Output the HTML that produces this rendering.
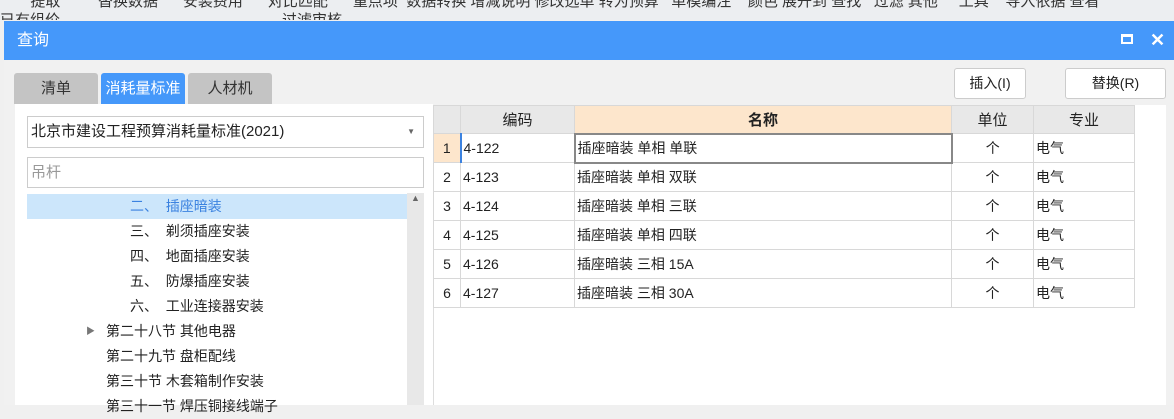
<!DOCTYPE html>
<html><head><meta charset="utf-8"><style>
*{margin:0;padding:0;box-sizing:border-box}
body{width:1174px;height:405px;overflow:hidden;background:#f0f0f0;font-family:"Liberation Sans","Noto Sans CJK SC",sans-serif;font-size:14px;color:#222;position:relative}
.abs{position:absolute}
.menu{left:0;top:0;width:1174px;height:20px;background:#eceef1;overflow:hidden}
.menu div{position:absolute;white-space:nowrap;font-size:15px;color:#333}
.title{left:4px;top:21px;width:1170px;height:39px;background:#4598fa;color:#fff;font-size:16px;line-height:39px;padding-left:13px}
.body{left:4px;top:60px;width:1170px;height:345px;background:#f1f1f1}
.tab{position:absolute;top:73px;height:31px;line-height:31px;text-align:center;font-size:15px;background:#c4c4c4;color:#333;border-radius:3px 3px 0 0}
.btn{top:68px;height:31px;line-height:29px;text-align:center;background:#fff;border:1px solid #ccc;border-radius:3px;font-size:14px}
table{border-collapse:collapse;font-size:14px}
td{border:1px solid #d8d8d8;height:29px;padding:0 2px;background:#fff}
th{border:1px solid #d8d8d8;height:28px;background:#e8e8e8;font-weight:normal;font-size:15px}
.tr{height:25px;line-height:25px;font-size:14px;white-space:nowrap}
</style></head><body>
<div class="abs menu">
<div style="left:22px;top:-10px">&nbsp;&nbsp;提取&nbsp;&nbsp;&nbsp;&nbsp;&nbsp;&nbsp;&nbsp;&nbsp;&nbsp;替换数据&nbsp;&nbsp;&nbsp;&nbsp;&nbsp;&nbsp;安装费用&nbsp;&nbsp;&nbsp;&nbsp;&nbsp;&nbsp;对比匹配&nbsp;&nbsp;&nbsp;&nbsp;&nbsp;&nbsp;重点项&nbsp;&nbsp;数据转换 增减说明 修改选单 转为预算&nbsp;&nbsp;&nbsp;单模编注&nbsp;&nbsp;&nbsp;&nbsp;颜色 展开到 查找&nbsp;&nbsp;&nbsp;过滤 其他&nbsp;&nbsp;&nbsp;&nbsp;&nbsp;工具&nbsp;&nbsp;&nbsp;&nbsp;导入依据 查看</div>
<div style="left:0;top:9px">已有组价</div>
<div style="left:282px;top:9px">过滤审核</div>
</div>
<div class="abs title">查询<span style="position:absolute;left:1117px;top:13px;width:12px;height:10px;border:2px solid #fff;border-top-width:3px"></span><span style="position:absolute;left:1146px;top:0;font-size:18px;font-weight:bold">✕</span></div>
<div class="abs body"></div>
<div class="tab" style="left:14px;width:84px">清单</div>
<div class="tab" style="left:101px;width:84px;background:#4598fa;color:#fff">消耗量标准</div>
<div class="tab" style="left:188px;width:84px">人材机</div>
<div class="abs btn" style="left:954px;width:72px">插入(I)</div>
<div class="abs btn" style="left:1065px;width:101px">替换(R)</div>
<div class="abs" style="left:15px;top:104px;width:418px;height:301px;background:#fff"></div>
<div class="abs" style="left:27px;top:116px;width:397px;height:32px;border:1px solid #ccc;line-height:30px;padding-left:3px;font-size:15px">北京市建设工程预算消耗量标准(2021)<span style="position:absolute;right:8px;top:0;font-size:8px;color:#666">▼</span></div>
<div class="abs" style="left:27px;top:157px;width:397px;height:31px;border:1px solid #ccc;line-height:29px;padding-left:3px;font-size:15px;color:#999">吊杆</div>
<div class="abs" style="left:407px;top:193px;width:17px;height:212px;background:#e8e8e8"><span style="position:absolute;left:4px;top:0;font-size:9px;color:#666">▲</span></div>
<div class="abs" style="left:27px;top:194px;width:380px;height:25px;background:#cce6fb"></div>
<div class="abs tr" style="left:130px;top:194px;color:#3b82e0">二、&nbsp;&nbsp;插座暗装</div>
<div class="abs tr" style="left:130px;top:219px">三、&nbsp;&nbsp;剃须插座安装</div>
<div class="abs tr" style="left:130px;top:244px">四、&nbsp;&nbsp;地面插座安装</div>
<div class="abs tr" style="left:130px;top:269px">五、&nbsp;&nbsp;防爆插座安装</div>
<div class="abs tr" style="left:130px;top:294px">六、&nbsp;&nbsp;工业连接器安装</div>
<div class="abs tr" style="left:86px;top:319px;font-size:9px;color:#777">▶</div>
<div class="abs tr" style="left:106px;top:319px">第二十八节 其他电器</div>
<div class="abs tr" style="left:106px;top:344px">第二十九节 盘柜配线</div>
<div class="abs tr" style="left:106px;top:369px">第三十节 木套箱制作安装</div>
<div class="abs tr" style="left:106px;top:394px">第三十一节 焊压铜接线端子</div>
<div class="abs" style="left:433px;top:105px;width:733px;height:300px;background:#fff;border-left:1px solid #ddd"></div>
<table class="abs" style="left:433px;top:105px">
<tr><th style="width:27px"></th><th style="width:114px">编码</th><th style="width:377px;background:#fde6cc;font-weight:bold">名称</th><th style="width:82px">单位</th><th style="width:101px">专业</th></tr>
<tr><td style="background:#fde6cc;text-align:center">1</td><td style="border-left:2px solid #3b82e0">4-122</td><td style="border:2px solid #888">插座暗装 单相 单联</td><td align="center">个</td><td>电气</td></tr>
<tr><td align="center">2</td><td>4-123</td><td>插座暗装 单相 双联</td><td align="center">个</td><td>电气</td></tr>
<tr><td align="center">3</td><td>4-124</td><td>插座暗装 单相 三联</td><td align="center">个</td><td>电气</td></tr>
<tr><td align="center">4</td><td>4-125</td><td>插座暗装 单相 四联</td><td align="center">个</td><td>电气</td></tr>
<tr><td align="center">5</td><td>4-126</td><td>插座暗装 三相 15A</td><td align="center">个</td><td>电气</td></tr>
<tr><td align="center">6</td><td>4-127</td><td>插座暗装 三相 30A</td><td align="center">个</td><td>电气</td></tr>
</table>
</body></html>
